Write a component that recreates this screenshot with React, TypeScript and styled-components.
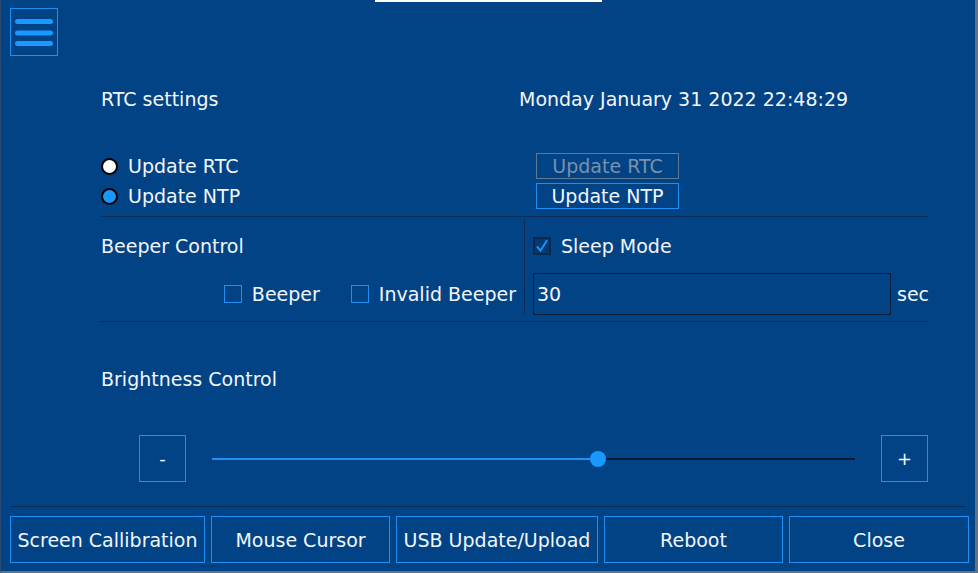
import styled, { createGlobalStyle } from "styled-components";

const COLOR_BG = "#024386";
const COLOR_ACCENT = "#1e8ff5";
const COLOR_BRIGHT = "#1799ff";
const COLOR_TEXT = "#f2f6fa";
const COLOR_RULE = "#0a2c55";

const GlobalStyle = createGlobalStyle`
  html, body {
    margin: 0;
    padding: 0;
    background: #5f7388;
  }
  * {
    box-sizing: border-box;
  }
`;

function MenuIcon() {
  return (
    <svg width="40" height="30" viewBox="0 0 40 30">
      <rect x="1" y="3" width="38" height="5" rx="2.5" fill={COLOR_BRIGHT} />
      <rect x="1" y="14.5" width="38" height="5" rx="2.5" fill={COLOR_BRIGHT} />
      <rect x="1" y="25" width="38" height="5" rx="2.5" fill={COLOR_BRIGHT} />
    </svg>
  );
}

function CheckMark() {
  return (
    <svg width="18" height="18" viewBox="0 0 18 18">
      <path d="M2.5 9.5 L7 15 L15.5 1.5" fill="none" stroke={COLOR_BRIGHT} strokeWidth="2.4" />
    </svg>
  );
}

export default function App() {
  const brightness = 60;

  return (
    <>
      <GlobalStyle />
      <Page>
        <Header>
          <MenuButton>
            <MenuIcon />
          </MenuButton>
          <TabStrip />
        </Header>

        <Content>
          <TitleRow>
            <Label>RTC settings</Label>
            <DateLabel>Monday January 31 2022 22:48:29</DateLabel>
          </TitleRow>

          <RtcRows>
            <RtcRow>
              <RadioLabel>
                <Radio $fill="#ffffff" />
                Update RTC
              </RadioLabel>
              <SmallButton $disabled>Update RTC</SmallButton>
            </RtcRow>
            <RtcRow>
              <RadioLabel>
                <Radio $fill={COLOR_BRIGHT} />
                Update NTP
              </RadioLabel>
              <SmallButton>Update NTP</SmallButton>
            </RtcRow>
          </RtcRows>
          <Rule />

          <BeeperGrid>
            <BeeperLeft>
              <RowA>
                <Label>Beeper Control</Label>
              </RowA>
              <CheckRow>
                <CheckLabel>
                  <Box />
                  Beeper
                </CheckLabel>
                <CheckLabel>
                  <Box />
                  Invalid Beeper
                </CheckLabel>
              </CheckRow>
            </BeeperLeft>
            <BeeperRight>
              <RowA>
                <CheckLabel>
                  <Box $checked>
                    <CheckMark />
                  </Box>
                  Sleep Mode
                </CheckLabel>
              </RowA>
              <InputRow>
                <NumberField>30</NumberField>
                <Label>sec</Label>
              </InputRow>
            </BeeperRight>
          </BeeperGrid>
          <Rule />

          <BrightnessTitle>
            <Label>Brightness Control</Label>
          </BrightnessTitle>
          <SliderRow>
            <StepButton>-</StepButton>
            <Track>
              <TrackFill style={{ width: `${brightness}%` }} />
              <Handle style={{ left: `${brightness}%` }} />
            </Track>
            <StepButton>+</StepButton>
          </SliderRow>
        </Content>

        <FooterRule />
        <Footer>
          <FooterButton>Screen Callibration</FooterButton>
          <FooterButton>Mouse Cursor</FooterButton>
          <FooterButton>USB Update/Upload</FooterButton>
          <FooterButton>Reboot</FooterButton>
          <FooterButton>Close</FooterButton>
        </Footer>
      </Page>
    </>
  );
}

const Page = styled.div`
  width: 978px;
  height: 573px;
  background: ${COLOR_BG};
  border-left: 1px solid #2b4c70;
  border-right: 3px solid #5f7388;
  border-bottom: 2px solid #5f7388;
  color: ${COLOR_TEXT};
  font-family: "DejaVu Sans", "Liberation Sans", sans-serif;
  font-size: 19px;
  display: flex;
  flex-direction: column;
  overflow: hidden;
`;

const Header = styled.div`
  display: flex;
  align-items: flex-start;
  height: 56px;
  padding-left: 9px;
`;

const MenuButton = styled.div`
  margin-top: 8px;
  width: 48px;
  height: 48px;
  border: 1px solid ${COLOR_ACCENT};
  display: flex;
  align-items: center;
  justify-content: center;
  padding-bottom: 2px;
`;

const TabStrip = styled.div`
  margin-left: 317px;
  width: 227px;
  height: 2px;
  background: #ffffff;
`;

const Content = styled.div`
  padding: 0 47px 0 100px;
`;

const Label = styled.span`
  line-height: 22px;
  white-space: nowrap;
`;

const TitleRow = styled.div`
  margin-top: 32px;
  height: 22px;
  display: grid;
  grid-template-columns: 418px 1fr;
  align-items: center;
`;

const DateLabel = styled(Label)``;

const RtcRows = styled.div`
  margin-top: 41px;
  display: flex;
  flex-direction: column;
`;

const RtcRow = styled.div`
  height: 30px;
  display: grid;
  grid-template-columns: 435px 143px;
  align-items: center;
`;

const RadioLabel = styled.label`
  display: flex;
  align-items: center;
  gap: 10px;
  line-height: 22px;
`;

const Radio = styled.span<{ $fill: string }>`
  width: 17px;
  height: 17px;
  border-radius: 50%;
  border: 2.5px solid #000000;
  background: ${(p) => p.$fill};
`;

const SmallButton = styled.div<{ $disabled?: boolean }>`
  height: 26px;
  border: 1px solid ${(p) => (p.$disabled ? "#5d7a99" : COLOR_ACCENT)};
  color: ${(p) => (p.$disabled ? "#7a91aa" : COLOR_TEXT)};
  display: flex;
  align-items: center;
  justify-content: center;
  white-space: nowrap;
`;

const Rule = styled.div`
  margin-top: 5px;
  height: 1px;
  background: ${COLOR_RULE};
`;

const BeeperGrid = styled.div`
  display: grid;
  grid-template-columns: 424px 1fr;
  padding: 3px 0 1px;
`;

const BeeperLeft = styled.div`
  border-right: 1px solid ${COLOR_RULE};
  padding: 15px 8px 0 0;
  display: flex;
  flex-direction: column;
`;

const BeeperRight = styled.div`
  padding: 15px 0 0 8px;
  display: flex;
  flex-direction: column;
`;

const RowA = styled.div`
  height: 22px;
  display: flex;
  align-items: center;
`;

const CheckRow = styled.div`
  margin-top: 16px;
  height: 42px;
  display: flex;
  align-items: center;
  justify-content: flex-end;
  gap: 31px;
`;

const CheckLabel = styled.label`
  display: flex;
  align-items: center;
  gap: 10px;
  line-height: 22px;
  white-space: nowrap;
`;

const Box = styled.span<{ $checked?: boolean }>`
  width: 18px;
  height: 18px;
  border: ${(p) => (p.$checked ? "2px solid #0d2a4c" : `1.5px solid ${COLOR_ACCENT}`)};
  background: ${(p) => (p.$checked ? "#013a75" : "transparent")};
  display: flex;
  align-items: center;
  justify-content: center;
  overflow: visible;
`;

const InputRow = styled.div`
  margin-top: 16px;
  height: 42px;
  display: flex;
  align-items: center;
  gap: 6px;
`;

const NumberField = styled.div`
  width: 358px;
  height: 42px;
  border: 1px solid #0b1d36;
  padding-left: 3px;
  display: flex;
  align-items: center;
`;

const BrightnessTitle = styled.div`
  margin-top: 46px;
  height: 22px;
  display: flex;
  align-items: center;
`;

const SliderRow = styled.div`
  margin: 45px 0 0 38px;
  display: flex;
  align-items: center;
  gap: 26px;
`;

const StepButton = styled.div`
  width: 47px;
  height: 47px;
  border: 1px solid ${COLOR_ACCENT};
  display: flex;
  align-items: center;
  justify-content: center;
  font-size: 18px;
`;

const Track = styled.div`
  position: relative;
  flex: 1;
  height: 2px;
  background: #071a33;
`;

const TrackFill = styled.div`
  height: 2px;
  background: ${COLOR_ACCENT};
`;

const Handle = styled.div`
  position: absolute;
  top: 50%;
  width: 16px;
  height: 16px;
  border-radius: 50%;
  background: ${COLOR_BRIGHT};
  transform: translate(-50%, -50%);
`;

const FooterRule = styled.div`
  margin: 24px 9px 0 9px;
  height: 1px;
  background: ${COLOR_RULE};
`;

const Footer = styled.div`
  margin-top: 9px;
  padding-left: 9px;
  display: grid;
  grid-template-columns: 195px 179px 202px 179px 180px;
  gap: 6px;
`;

const FooterButton = styled.div`
  height: 47px;
  border: 1px solid ${COLOR_ACCENT};
  display: flex;
  align-items: center;
  justify-content: center;
  white-space: nowrap;
`;
